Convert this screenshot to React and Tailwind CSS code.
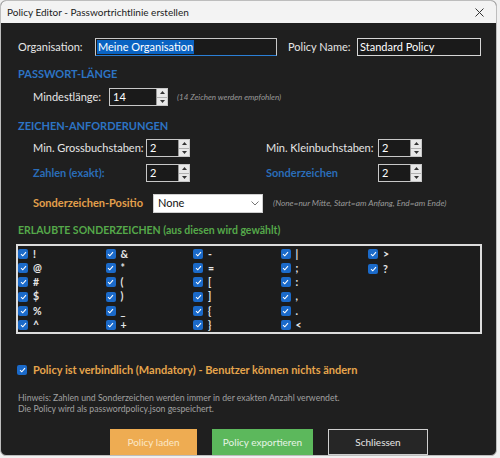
import React from "react";

function Spin({ value, cls }) {
  return (
    <div className={"flex h-[18px] border border-[#c8c8c8] bg-[#1a1a1a] " + cls}>
      <div className="flex-1 text-white text-[11px] leading-[16px] pl-[3px]">{value}</div>
      <div className="w-[11px] flex flex-col bg-[#e8e8e8] border-l border-[#9a9a9a]">
        <div className="flex-1 flex items-center justify-center border-b border-[#b0b0b0]">
          <svg width="5" height="3" viewBox="0 0 5 3"><path d="M0 3 L2.5 0 L5 3 Z" fill="#333" /></svg>
        </div>
        <div className="flex-1 flex items-center justify-center">
          <svg width="5" height="3" viewBox="0 0 5 3"><path d="M0 0 L2.5 3 L5 0 Z" fill="#333" /></svg>
        </div>
      </div>
    </div>
  );
}

function Check() {
  return (
    <div className="w-[10px] h-[10px] rounded-[2px] bg-[#1b6ac9] flex items-center justify-center shrink-0">
      <svg width="7" height="6" viewBox="0 0 7 6">
        <path d="M1 3.2 L2.8 4.8 L6 1.2" fill="none" stroke="white" strokeWidth="1.1" />
      </svg>
    </div>
  );
}

const cols = [
  ["!", "@", "#", "$", "%", "^"],
  ["&", "*", "(", ")", "_", "+"],
  ["-", "=", "[", "]", "{", "}"],
  ["|", ";", ":", ",", ".", "<"],
  [">", "?"],
];

export default function App() {
  return (
    <div className="w-[500px] h-[458px] bg-[#f0f0f0] font-['Lato','Segoe_UI',sans-serif] overflow-hidden">
      <div className="w-[497px] h-[456px] rounded-[6px] border border-[#bdbdbd] overflow-hidden flex flex-col bg-[#1f1f1f]">
        {/* title bar */}
        <div className="h-[22px] bg-[#f3f3f3] flex items-center justify-between pl-[6px] pr-[12px] shrink-0">
          <span className="text-[10px] text-[#1a1a1a]">Policy Editor - Passwortrichtlinie erstellen</span>
          <svg width="9" height="9" viewBox="0 0 9 9">
            <path d="M0.5 0.5 L8.5 8.5 M8.5 0.5 L0.5 8.5" stroke="#333" strokeWidth="1" />
          </svg>
        </div>

        {/* body */}
        <div className="flex-1 flex flex-col text-[11px] text-[#e6e6e6] pl-[17px] whitespace-nowrap">
          {/* row 1 */}
          <div className="flex items-center mt-[15px] h-[18px]">
            <span className="w-[77px]">Organisation:</span>
            <div className="w-[182px] h-[18px] border border-[#c8c8c8] border-b-[#2b7fd6] bg-[#1a1a1a] flex items-center pl-[1px]">
              <span className="bg-[#0a63c2] text-white leading-[14px] px-[1px]">Meine Organisation</span>
            </div>
            <span className="ml-[11px] w-[69px]">Policy Name:</span>
            <div className="w-[124px] h-[18px] border border-[#d6d6d6] bg-[#1a1a1a] flex items-center pl-[2px] text-white">
              Standard Policy
            </div>
          </div>

          {/* Passwort-Länge */}
          <div className="mt-[11px] h-[14px] leading-[14px] text-[11px] font-bold text-[#2d74c4]">PASSWORT-LÄNGE</div>
          <div className="flex items-center mt-[7px] h-[18px] pl-[15px]">
            <span className="w-[76px]">Mindestlänge:</span>
            <Spin value="14" cls="w-[59px]" />
            <span className="ml-[9px] text-[8px] italic text-[#9a9a9a]">(14 Zeichen werden empfohlen)</span>
          </div>

          {/* Zeichen-Anforderungen */}
          <div className="mt-[13px] h-[14px] leading-[14px] text-[11px] font-bold text-[#2d74c4]">ZEICHEN-ANFORDERUNGEN</div>
          <div className="flex items-center mt-[6px] h-[18px] pl-[15px]">
            <span className="w-[113px]">Min. Grossbuchstaben:</span>
            <Spin value="2" cls="w-[44px]" />
            <span className="ml-[76px] w-[112px]">Min. Kleinbuchstaben:</span>
            <Spin value="2" cls="w-[44px]" />
          </div>
          <div className="flex items-center mt-[7px] h-[18px] pl-[15px]">
            <span className="w-[113px] font-bold text-[#2a6db8]">Zahlen (exakt):</span>
            <Spin value="2" cls="w-[44px]" />
            <span className="ml-[76px] w-[112px] font-bold text-[#2a6db8]">Sonderzeichen</span>
            <Spin value="2" cls="w-[44px]" />
          </div>

          {/* Position */}
          <div className="flex items-center mt-[12px] h-[19px] pl-[15px]">
            <span className="w-[120px] font-bold text-[#e3a04c] overflow-hidden">Sonderzeichen-Positio</span>
            <div className="w-[110px] h-[19px] bg-white border border-[#cfcfcf] flex items-center justify-between pl-[4px] pr-[3px] text-[#111]">
              <span>None</span>
              <svg width="8" height="5" viewBox="0 0 8 5">
                <path d="M0.5 0.5 L4 4 L7.5 0.5" fill="none" stroke="#777" strokeWidth="1" />
              </svg>
            </div>
            <span className="ml-[10px] text-[8.3px] italic text-[#9a9a9a]">(None=nur Mitte, Start=am Anfang, End=am Ende)</span>
          </div>

          {/* Erlaubte Sonderzeichen */}
          <div className="mt-[10px] h-[14px] leading-[14px] text-[10.5px] font-bold text-[#55a84a]">ERLAUBTE SONDERZEICHEN (aus diesen wird gewählt)</div>
          <div className="mt-[7px] -ml-[2px] w-[466px] h-[90px] border-2 border-[#dcdcdc] flex pt-[1px] bg-[#1c1c1c]">
            {cols.map((c, i) => (
              <div key={i} className="w-[87.5px] flex flex-col">
                {c.map((ch) => (
                  <div key={ch} className="h-[14.6px] flex items-center gap-[5px]">
                    <Check />
                    <span className="text-[10.5px] font-bold text-[#e6e6e6] leading-none">{ch}</span>
                  </div>
                ))}
              </div>
            ))}
          </div>

          {/* Mandatory */}
          <div className="flex items-center mt-[30px] h-[12px] gap-[6px] -ml-[1px]">
            <Check />
            <span className="font-bold text-[#e6a54c] text-[11px]">Policy ist verbindlich (Mandatory) - Benutzer können nichts ändern</span>
          </div>

          {/* Hinweis */}
          <div className="mt-[16px] text-[8.7px] leading-[11px] text-[#a0a0a0]">
            <div>Hinweis: Zahlen und Sonderzeichen werden immer in der exakten Anzahl verwendet.</div>
            <div>Die Policy wird als passwordpolicy.json gespeichert.</div>
          </div>

          {/* Buttons */}
          <div className="flex mt-[15px] h-[26px] pl-[92px] gap-[15px] text-[10px]">
            <div className="w-[87px] h-[26px] bg-[#eeac52] text-[#fbe8c8] flex items-center justify-center">Policy laden</div>
            <div className="w-[101px] h-[26px] bg-[#5cb85c] text-[#e6f4e6] flex items-center justify-center">Policy exportieren</div>
            <div className="w-[100px] h-[26px] bg-[#262626] border border-[#cfcfcf] text-[#e6e6e6] flex items-center justify-center">Schliessen</div>
          </div>
        </div>
      </div>
    </div>
  );
}
